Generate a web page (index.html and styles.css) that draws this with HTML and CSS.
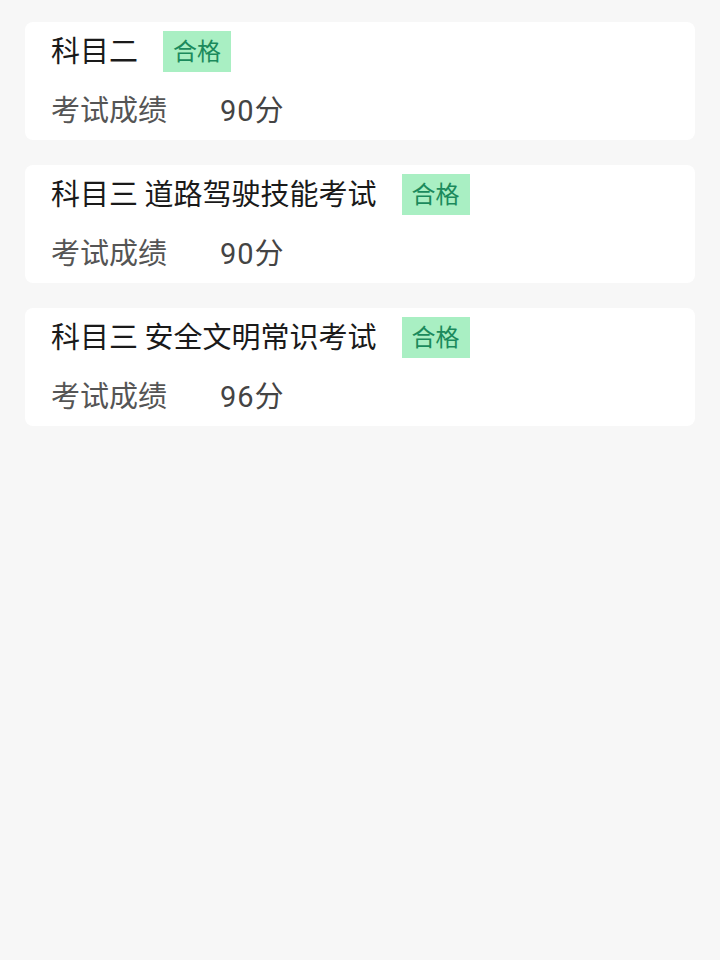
FILE: index.html
```html
<!DOCTYPE html>
<html>
<head>
    <meta charset="utf-8">
    <title>考试成绩</title>
    <link rel="stylesheet" href="styles.css">
</head>
<body>
    <div class="list">
        <div class="card">
            <div class="title-row">
                <span class="title">科目二</span>
                <span class="badge">合格</span>
            </div>
            <div class="score-row">
                <span class="label">考试成绩</span>
                <span class="score">90分</span>
            </div>
        </div>

        <div class="card">
            <div class="title-row">
                <span class="title">科目三 道路驾驶技能考试</span>
                <span class="badge">合格</span>
            </div>
            <div class="score-row">
                <span class="label">考试成绩</span>
                <span class="score">90分</span>
            </div>
        </div>

        <div class="card">
            <div class="title-row">
                <span class="title">科目三 安全文明常识考试</span>
                <span class="badge">合格</span>
            </div>
            <div class="score-row">
                <span class="label">考试成绩</span>
                <span class="score">96分</span>
            </div>
        </div>
    </div>
</body>
</html>
```

FILE: styles.css
```css
body {
    margin: 0;
    background-color: #f7f7f7;
    font-family: "Noto Sans CJK SC", "Noto Sans", sans-serif;
}
.list {
    display: flex;
    flex-direction: column;
    gap: 25px;
    padding: 22px 25px;
}
.card {
    background-color: #fff;
    border-radius: 8px;
    padding: 9px 26px 10px;
}
.title-row {
    display: flex;
    align-items: center;
    height: 41px;
}
.title {
    font-size: 29px;
    color: #1a1a1a;
    line-height: 37px;
    padding-bottom: 4px;
}
.badge {
    margin-left: 25px;
    background-color: #a9efc3;
    color: #1b8a5c;
    font-size: 24px;
    line-height: 38px;
    padding: 0 10px 3px;
}
.score-row {
    display: flex;
    align-items: center;
    margin-top: 16px;
    height: 40px;
    padding-bottom: 2px;
    font-size: 29px;
    color: #555;
}
.label {
    margin-right: 53px;
}
.score {
    color: #444;
    font-family: "Roboto", "Noto Sans CJK SC", sans-serif;
    letter-spacing: 1px;
}
```
